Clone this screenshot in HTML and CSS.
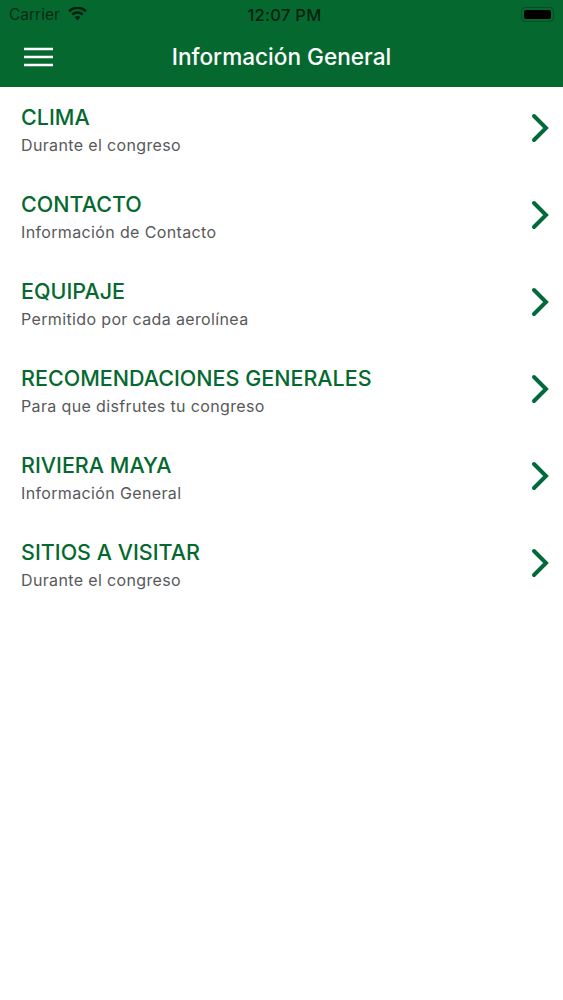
FILE: index.html
```html
<!DOCTYPE html>
<html lang="es">
<head>
<meta charset="utf-8">
<title>Información General</title>
<link rel="stylesheet" href="styles.css">
</head>
<body>
<header class="header">
  <div class="status">
    <div class="status-left">
      <span>Carrier</span>
      <svg class="wifi" viewBox="0 0 20 15" width="19" height="14"><path d="M10 14.4 7 11a4.3 4.3 0 0 1 6 0zM5.2 9.1 3.4 7.2a9.5 9.5 0 0 1 13.2 0l-1.8 1.9a7 7 0 0 0-9.6 0zM1.8 5.5 0 3.6a14.3 14.3 0 0 1 20 0l-1.8 1.9a11.8 11.8 0 0 0-16.4 0z"/></svg>
    </div>
    <span class="time">12:07 PM</span>
    <div class="battery"><span class="battery-fill"></span></div>
  </div>
  <div class="nav">
    <svg class="menu" viewBox="0 0 30 20" width="30" height="20"><path d="M0 2h29M0 10h29M0 18h29"/></svg>
    <h1 class="title">Información General</h1>
  </div>
</header>
<ul class="list">
  <li class="row"><div class="text"><div class="name">CLIMA</div><div class="sub">Durante el congreso</div></div><svg class="chev" viewBox="0 0 20 30" width="20" height="30"><path d="M3 3l12 12L3 27"/></svg></li>
  <li class="row"><div class="text"><div class="name">CONTACTO</div><div class="sub">Información de Contacto</div></div><svg class="chev" viewBox="0 0 20 30" width="20" height="30"><path d="M3 3l12 12L3 27"/></svg></li>
  <li class="row"><div class="text"><div class="name">EQUIPAJE</div><div class="sub">Permitido por cada aerolínea</div></div><svg class="chev" viewBox="0 0 20 30" width="20" height="30"><path d="M3 3l12 12L3 27"/></svg></li>
  <li class="row"><div class="text"><div class="name">RECOMENDACIONES GENERALES</div><div class="sub">Para que disfrutes tu congreso</div></div><svg class="chev" viewBox="0 0 20 30" width="20" height="30"><path d="M3 3l12 12L3 27"/></svg></li>
  <li class="row"><div class="text"><div class="name">RIVIERA MAYA</div><div class="sub">Información General</div></div><svg class="chev" viewBox="0 0 20 30" width="20" height="30"><path d="M3 3l12 12L3 27"/></svg></li>
  <li class="row"><div class="text"><div class="name">SITIOS A VISITAR</div><div class="sub">Durante el congreso</div></div><svg class="chev" viewBox="0 0 20 30" width="20" height="30"><path d="M3 3l12 12L3 27"/></svg></li>
</ul>
</body>
</html>
```
FILE: styles.css
```css
* { box-sizing: border-box; }
html, body { margin: 0; padding: 0; background: #fff; }
body { font-family: Inter, "Liberation Sans", sans-serif; width: 563px; height: 1000px; overflow: hidden; }
.header { height: 87px; background: #05692f; display: flex; flex-direction: column; }
.status { height: 29px; padding: 0 9px; display: grid; grid-template-columns: 1fr auto 1fr; align-items: center; color: #0a2a14; font-size: 15.5px; }
.status-left { display: flex; align-items: center; gap: 8px; }
.wifi { fill: #04200f; margin-top: -1px; }
.time { font-size: 16.5px; font-weight: 500; letter-spacing: 0.3px; color: #04200f; margin-left: 6px; }
.battery { justify-self: end; width: 33px; height: 15px; border: 1px solid #0a4a24; border-radius: 4px; padding: 2px; margin-right: 0; }
.battery-fill { display: block; height: 100%; background: #000; border-radius: 2px; }
.nav { flex: 1; display: flex; align-items: center; padding: 0 0 2px 24px; position: relative; }
.menu { stroke: #fff; stroke-width: 2.4; fill: none; }
.title { position: absolute; left: 0; right: 0; margin: -2px 0 0; text-align: center; color: #fff; font-size: 22.6px; font-weight: 500; }
.list { margin: 0; padding: 0; list-style: none; }
.row { height: 87px; padding: 0 12px 0 21px; display: flex; align-items: center; justify-content: space-between; }
.text { display: flex; flex-direction: column; gap: 5px; margin-top: -3px; }
.name { color: #05692f; font-size: 21.5px; font-weight: 500; line-height: 26px; }
.sub { color: #58595b; font-size: 16px; line-height: 20px; letter-spacing: 0.36px; }
.chev { stroke: #026a3a; stroke-width: 4; fill: none; stroke-linecap: round; stroke-linejoin: miter; margin-top: -6px; }
```
